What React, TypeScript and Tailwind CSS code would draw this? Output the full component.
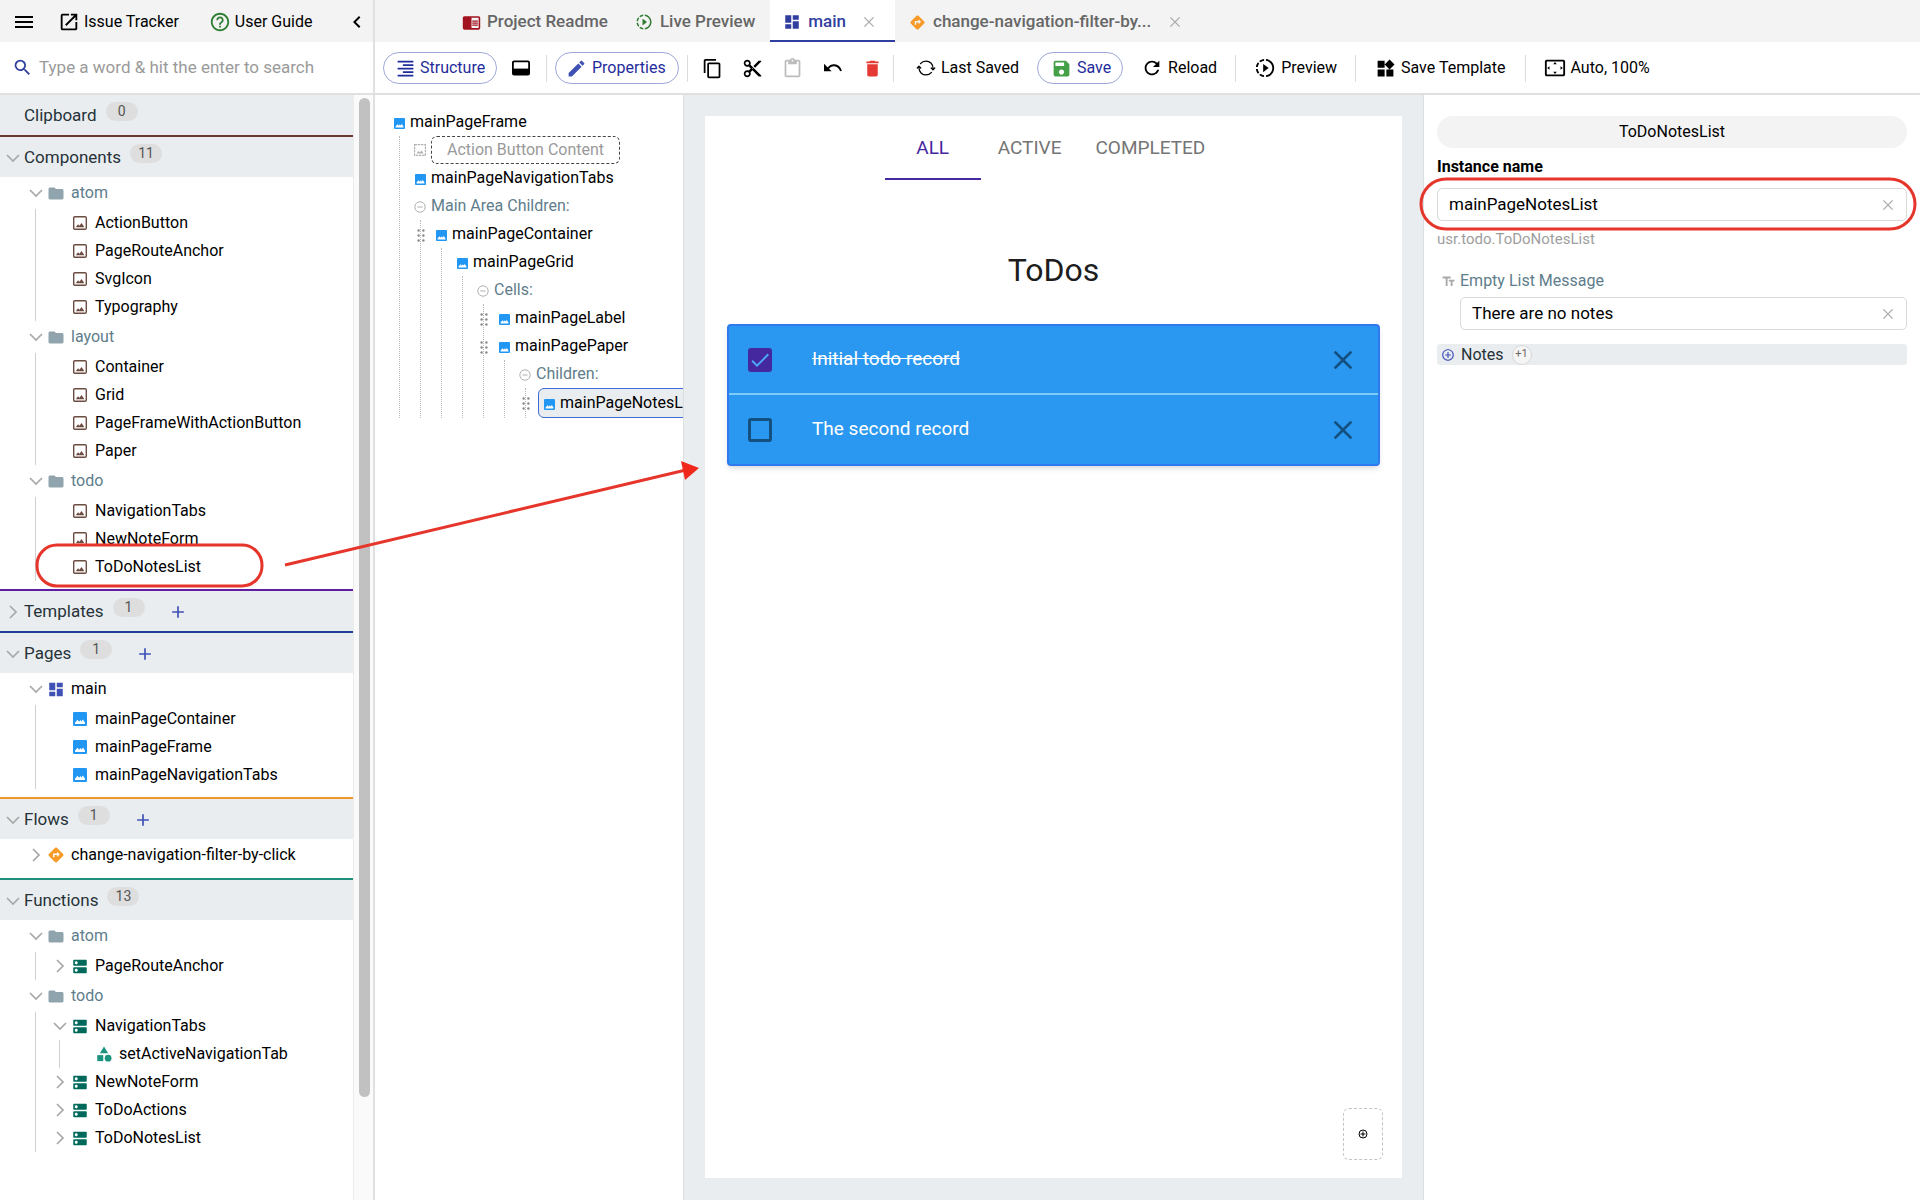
import type { ReactNode } from "react";
import {
  MdMenu, MdOpenInNew, MdHelpOutline, MdChevronLeft, MdSearch, MdChromeReaderMode, MdSlowMotionVideo,
  MdDashboard, MdDirections, MdClose, MdFormatAlignRight, MdEdit, MdContentCopy, MdContentCut,
  MdContentPaste, MdDelete, MdSave, MdRefresh, MdWidgets, MdOutlineSettingsOverscan, MdFolder, MdDns,
  MdCategory, MdAdd, MdTextFields, MdAddCircleOutline, MdCheck,
} from "react-icons/md";
import { IoSyncOutline } from "react-icons/io5";

type Kind = "component" | "instance" | "page" | "flow" | "folder" | "scope" | "fn";

function ImageOutline({ className }: { className: string }) {
  return (
    <svg viewBox="0 0 14 14" className={className} fill="none" aria-hidden="true">
      <rect x="0.7" y="0.7" width="12.6" height="12.6" rx="1.2" stroke="currentColor" strokeWidth="1.4" />
      <path d="M2.800 11.200 5 8.200 6.400 9.800 8.600 7 11.400 11.200z" fill="currentColor" />
    </svg>
  );
}

function ImageFilled({ className }: { className: string }) {
  return (
    <svg viewBox="0 0 14 14" className={className} aria-hidden="true">
      <rect width="14" height="14" rx="1.2" fill="#2196f3" />
      <path d="M2 12 2 10.800 4.400 7.800 6.200 9.800 7.400 8 8.400 9.400 10 7.600 12 10.800 12 12z" fill="#fff" />
    </svg>
  );
}

function ImageDashed({ className }: { className: string }) {
  return (
    <svg viewBox="0 0 12 12" className={className} fill="none" aria-hidden="true">
      <rect x="0.6" y="0.6" width="10.8" height="10.8" stroke="currentColor" strokeWidth="1.2" strokeDasharray="2.4 0.8" />
      <path d="M2.6 9.4 4.6 7 6 8.4 7.6 6.4 9.6 9.4z" fill="currentColor" />
    </svg>
  );
}

function CloseX() {
  return (
    <svg viewBox="0 0 16 16" className="size-4" fill="none" stroke="currentColor" strokeWidth="1.3" aria-hidden="true">
      <path d="M3.400 3.400l9.200 9.200M12.600 3.400 3.400 12.600" />
    </svg>
  );
}

function BottomPanelIcon() {
  return (
    <svg viewBox="0 0 18 16" className="h-4 w-[18px]" aria-hidden="true">
      <rect x="0.9" y="1.4" width="16.2" height="13.2" rx="1.2" fill="none" stroke="currentColor" strokeWidth="1.8" />
      <path d="M1 8.600h16V14H1z" fill="currentColor" />
    </svg>
  );
}

function UndoIcon() {
  return (
    <svg viewBox="0 0 18 10" className="h-2.5 w-[18px]" aria-hidden="true">
      <path d="M3.500 6C5.500 3.200 8 2 10.400 2.200 13.400 2.400 15.800 4.400 17 8" fill="none" stroke="currentColor" strokeWidth="1.9" />
      <path d="M0 0.800V8.200H7.600z" fill="currentColor" />
    </svg>
  );
}

function CirclePlus({ className }: { className: string }) {
  return (
    <svg viewBox="0 0 10 10" className={className} fill="none" stroke="currentColor" aria-hidden="true">
      <circle cx="5" cy="5" r="4" />
      <path d="M2.500 5h5M5 2.500v5" />
    </svg>
  );
}

function Chevron({ open }: { open: boolean }) {
  return (
    <svg viewBox="0 0 14 14" className="size-3.5 shrink-0 text-[#a8a8a8]" fill="none" stroke="currentColor" strokeWidth="1.7" aria-hidden="true">
      <path d={open ? "M1 4l6 6 6-6" : "M4 1l6 6-6 6"} />
    </svg>
  );
}

function CircleMinus() {
  return (
    <svg viewBox="0 0 12 12" className="size-3 shrink-0 text-[#b0b0b0]" fill="none" stroke="currentColor" aria-hidden="true">
      <circle cx="6" cy="6" r="5.2" />
      <path d="M3.4 6h5.2" />
    </svg>
  );
}

function DragDots() {
  return (
    <svg viewBox="0 0 8 13" className="absolute -left-[18px] top-[9px] h-[13px] w-2 text-[#888]" fill="currentColor" aria-hidden="true">
      {[1.5, 6.5, 11.5].map((y) => (
        <g key={y}>
          <circle cx="1.6" cy={y} r="1.2" />
          <circle cx="6.4" cy={y} r="1.2" />
        </g>
      ))}
    </svg>
  );
}

function KindIcon({ kind }: { kind: Kind }) {
  switch (kind) {
    case "component":
      return <ImageOutline className="size-3.5 text-[#6d4c41]" />;
    case "instance":
      return <ImageFilled className="size-3.5" />;
    case "page":
      return <MdDashboard className="size-[19px] text-[#3f51b5]" />;
    case "flow":
      return <MdDirections className="size-[18px] text-[#f89a28]" />;
    case "folder":
      return <MdFolder className="size-[19px] text-[#90a4ae]" />;
    case "scope":
      return <MdDns className="size-[19px] text-[#00695c]" />;
    case "fn":
      return <MdCategory className="size-[18px] text-[#1a937f]" />;
  }
}

function SectionHeader({ title, count, open, add, line }: { title: string; count: number; open?: boolean; add?: boolean; line: string }) {
  return (
    <div className={`flex h-[42px] items-center border-t-2 bg-[#e9edf0] pl-1.5 pt-0.5 ${line}`}>
      <span className="flex w-[18px]">{open !== undefined && <Chevron open={open} />}</span>
      <h2 className="text-[17px] text-[#263238]">{title}</h2>
      <span className="mb-2.5 ml-[9px] w-8 rounded-full bg-[#dedede] text-center text-sm leading-[19px] text-[#555]">{count}</span>
      {add && (
        <button aria-label={`Add to ${title}`} className="ml-[23px] text-[#3f51b5]">
          <MdAdd className="size-5" />
        </button>
      )}
    </div>
  );
}

function Row({ kind, label, open, top }: { kind: Kind; label: string; open?: boolean; top?: boolean }) {
  return (
    <div className={`flex items-center ${top ? "h-8" : "h-7"} ${kind === "folder" ? "text-[#607d8b]" : "text-black"}`}>
      <span className="flex w-[18px]">{open !== undefined && <Chevron open={open} />}</span>
      <span className="mr-1.5 flex w-[18px] justify-center">
        <KindIcon kind={kind} />
      </span>
      <span className="whitespace-nowrap">{label}</span>
    </div>
  );
}

function Branch({ children }: { children: ReactNode }) {
  return <div className="ml-1.5 border-l border-[#d0d0d0] pl-[17px]">{children}</div>;
}

function SideTree() {
  return (
    <div className="min-w-0 flex-1 overflow-hidden">
      <SectionHeader title="Clipboard" count={0} line="-mt-0.5 border-transparent" />
      <SectionHeader title="Components" count={11} open line="border-[#6d3b2c]" />
      <div className="pb-2 pl-[29px]">
        <Row top kind="folder" label="atom" open />
        <Branch>
          {["ActionButton", "PageRouteAnchor", "SvgIcon", "Typography"].map((n) => <Row key={n} kind="component" label={n} />)}
        </Branch>
        <Row top kind="folder" label="layout" open />
        <Branch>
          {["Container", "Grid", "PageFrameWithActionButton", "Paper"].map((n) => <Row key={n} kind="component" label={n} />)}
        </Branch>
        <Row top kind="folder" label="todo" open />
        <Branch>
          {["NavigationTabs", "NewNoteForm", "ToDoNotesList"].map((n) => <Row key={n} kind="component" label={n} />)}
        </Branch>
      </div>
      <SectionHeader title="Templates" count={1} open={false} add line="border-[#5e1fa5]" />
      <SectionHeader title="Pages" count={1} open add line="border-[#1f3f98]" />
      <div className="pb-2 pl-[29px]">
        <Row top kind="page" label="main" open />
        <Branch>
          {["mainPageContainer", "mainPageFrame", "mainPageNavigationTabs"].map((n) => <Row key={n} kind="instance" label={n} />)}
        </Branch>
      </div>
      <SectionHeader title="Flows" count={1} open add line="border-[#f0982c]" />
      <div className="pb-[7px] pl-[29px]">
        <Row top kind="flow" label="change-navigation-filter-by-click" open={false} />
      </div>
      <SectionHeader title="Functions" count={13} open line="border-[#1f8f7c]" />
      <div className="pl-[29px]">
        <Row top kind="folder" label="atom" open />
        <Branch>
          <Row kind="scope" label="PageRouteAnchor" open={false} />
        </Branch>
        <Row top kind="folder" label="todo" open />
        <Branch>
          <Row kind="scope" label="NavigationTabs" open />
          <Branch>
            <Row kind="fn" label="setActiveNavigationTab" />
          </Branch>
          <Row kind="scope" label="NewNoteForm" open={false} />
          <Row kind="scope" label="ToDoActions" open={false} />
          <Row kind="scope" label="ToDoNotesList" open={false} />
        </Branch>
      </div>
    </div>
  );
}

function TreeNode({ label, drag, group, children }: { label: string; drag?: boolean; group?: boolean; children?: ReactNode }) {
  return (
    <>
      <div className="relative flex h-7 items-center whitespace-nowrap">
        {drag && <DragDots />}
        <span className="mr-[5px] flex w-3 shrink-0 justify-center pt-0.5">
          {group ? <CircleMinus /> : <ImageFilled className="size-[11px]" />}
        </span>
        <span className={group ? "text-[#607d8b]" : "text-black"}>{label}</span>
      </div>
      {children && <div className="ml-1.5 border-l border-dotted border-[#b8b8b8] pl-3.5">{children}</div>}
    </>
  );
}

function StructurePanel() {
  return (
    <section aria-label="Structure" className="w-[309px] shrink-0 overflow-hidden border-r border-[#dcdfe2] pl-[18px] pt-[13px]">
      <TreeNode label="mainPageFrame">
        <div className="flex h-7 items-center whitespace-nowrap">
          <ImageDashed className="mr-[5px] size-3 text-[#b0b0b0]" />
          <span className="rounded-md border border-dashed border-[#444] px-[15px] leading-[26px] text-[#9a9a9a]">Action Button Content</span>
        </div>
        <TreeNode label="mainPageNavigationTabs" />
        <TreeNode label="Main Area Children:" group>
          <TreeNode label="mainPageContainer" drag>
            <TreeNode label="mainPageGrid">
              <TreeNode label="Cells:" group>
                <TreeNode label="mainPageLabel" drag />
                <TreeNode label="mainPagePaper" drag>
                  <TreeNode label="Children:" group>
                    <div className="relative">
                      <DragDots />
                      <div className="-ml-0.5 w-64 rounded-md border border-[#3f6ad8] bg-[#e9edf0] pl-1">
                        <TreeNode label="mainPageNotesList" />
                      </div>
                    </div>
                  </TreeNode>
                </TreeNode>
              </TreeNode>
            </TreeNode>
          </TreeNode>
        </TreeNode>
      </TreeNode>
    </section>
  );
}

function Separator() {
  return <span className="h-[27px] w-px shrink-0 bg-[#dcdcdc]" />;
}

function Pill({ icon, label, className }: { icon: ReactNode; label: string; className: string }) {
  return (
    <button className={`flex h-8 shrink-0 items-center whitespace-nowrap rounded-full border border-[#9fa8da] text-[#1f2d9c] ${className}`}>
      {icon}
      {label}
    </button>
  );
}

function Tool({ icon, label, className }: { icon: ReactNode; label: string; className: string }) {
  return (
    <button className={`flex shrink-0 items-center gap-[5px] whitespace-nowrap ${className}`}>
      {icon}
      {label}
    </button>
  );
}

function Toolbar() {
  return (
    <div className="flex h-[51px] items-center pl-2 pt-px">
      <Pill className="w-[114px] gap-1 pl-[11px]" icon={<MdFormatAlignRight className="size-[21px]" />} label="Structure" />
      <button aria-label="Bottom panel" className="ml-[15px] mr-4"><BottomPanelIcon /></button>
      <Separator />
      <Pill className="ml-2 mr-2 w-[124px] gap-[5px] pl-2.5" icon={<MdEdit className="size-[21px] text-[#3f51b5]" />} label="Properties" />
      <Separator />
      <div className="flex items-center gap-[19px] pl-3.5 pr-2.5">
        <button aria-label="Copy"><MdContentCopy className="size-[21px]" /></button>
        <button aria-label="Cut"><MdContentCut className="size-[21px]" /></button>
        <button aria-label="Paste" className="text-[#bdbdbd]"><MdContentPaste className="size-[21px]" /></button>
        <button aria-label="Undo" className="flex w-[21px] justify-center"><UndoIcon /></button>
        <button aria-label="Delete" className="text-[#e53935]"><MdDelete className="size-[21px]" /></button>
      </div>
      <Separator />
      <Tool className="ml-[22px]" icon={<IoSyncOutline className="size-5" />} label="Last Saved" />
      <Pill className="ml-[18px] w-[86px] gap-[5px] pl-[13px]" icon={<MdSave className="size-[21px] text-[#43a047]" />} label="Save" />
      <Tool className="ml-[18px] mr-[18px]" icon={<MdRefresh className="size-[22px]" />} label="Reload" />
      <Separator />
      <Tool className="ml-[18px] mr-[18px]" icon={<MdSlowMotionVideo className="size-[22px]" />} label="Preview" />
      <Separator />
      <Tool className="mx-[19px]" icon={<MdWidgets className="size-[21px]" />} label="Save Template" />
      <Separator />
      <Tool className="ml-[18px]" icon={<MdOutlineSettingsOverscan className="size-[22px]" />} label="Auto, 100%" />
    </div>
  );
}

function Tabs() {
  return (
    <div role="tablist" className="flex h-[42px] bg-[#f3f3f3] pl-[87px] text-[17px] font-medium text-[#666]">
      <button role="tab" aria-selected="false" className="flex items-center gap-1.5 whitespace-nowrap pr-[27px] pt-0.5">
        <MdChromeReaderMode className="size-[19px] text-[#a3101f]" />
        Project Readme
      </button>
      <button role="tab" aria-selected="false" className="flex items-center gap-[7px] whitespace-nowrap pr-[15px] pt-0.5">
        <MdSlowMotionVideo className="size-[18px] text-[#2e7d32]" />
        Live Preview
      </button>
      <div className="flex items-center border-b-2 border-[#303f9f] bg-white pl-[13px] pr-[18px] pt-1">
        <button role="tab" aria-selected="true" className="flex items-center gap-[7px] text-[#303f9f]">
          <MdDashboard className="size-[18px]" />
          main
        </button>
        <button aria-label="Close main" className="ml-[15px] text-[#aaa]"><CloseX /></button>
      </div>
      <div className="flex items-center pl-3.5 pt-0.5">
        <button role="tab" aria-selected="false" className="flex items-center gap-[7px] whitespace-nowrap">
          <MdDirections className="size-[17px] text-[#f89a28]" />
          change-navigation-filter-by...
        </button>
        <button aria-label="Close flow" className="ml-4 text-[#aaa]"><CloseX /></button>
      </div>
    </div>
  );
}

function Note({ id, label, done }: { id: string; label: string; done?: boolean }) {
  return (
    <li className="flex h-[69px] items-center pl-[19px] pr-[23px]">
      <span className="relative flex size-6">
        <input
          id={id}
          type="checkbox"
          defaultChecked={done}
          className="size-6 appearance-none rounded-[3px] border-[3px] border-[#14507f] checked:border-[#4527a0] checked:bg-[#4527a0]"
        />
        {done && <MdCheck className="pointer-events-none absolute left-0 top-0 size-6 text-[#4aa8f5]" />}
      </span>
      <label htmlFor={id} className={`ml-10 flex-1 text-[19px] text-white ${done ? "line-through" : ""}`}>{label}</label>
      <button aria-label={`Delete ${label}`} className="text-[#14507f]"><MdClose className="-m-1 size-8" /></button>
    </li>
  );
}

function Canvas() {
  return (
    <main className="flex min-w-0 flex-1 bg-[#e9edf0] px-[21px] pb-[22px] pt-[21px]">
      <div className="relative flex flex-1 flex-col bg-white px-[22px]">
        <div role="tablist" className="flex justify-center text-[19px] text-[#757575]">
          <button role="tab" aria-selected="true" className="h-16 w-24 border-b-2 border-[#4527a0] pt-0.5 text-[#4527a0]">ALL</button>
          <button role="tab" aria-selected="false" className="h-16 px-[17px]">ACTIVE</button>
          <button role="tab" aria-selected="false" className="h-16 px-[17px]">COMPLETED</button>
        </div>
        <h1 className="mt-[66px] text-center text-[32px] leading-[48px] text-[#1d1d1d]">ToDos</h1>
        <ul className="mt-[30px] divide-y-2 divide-[#7ccbf8] rounded-sm border-2 border-[#3079ee] bg-[#2a98f0] shadow-md">
          <Note id="note-1" label="Initial todo record" done />
          <Note id="note-2" label="The second record" />
        </ul>
        <button aria-label="Add component" className="mb-[18px] ml-auto mr-[-3px] mt-auto flex h-[52px] w-10 items-center justify-center rounded-md border border-dashed border-[#c4c4c4]">
          <CirclePlus className="size-2.5" />
        </button>
      </div>
    </main>
  );
}

function Field({ id, value }: { id: string; value: string }) {
  return (
    <div className="flex h-[33px] items-center rounded-[5px] border border-[#d9d9d9] bg-white pl-[11px] pr-2.5">
      <input id={id} defaultValue={value} className="min-w-0 flex-1 bg-transparent text-[17px] outline-none" />
      <button aria-label="Clear" className="text-[#aaa]"><CloseX /></button>
    </div>
  );
}

function PropertiesPanel() {
  return (
    <aside aria-label="Properties" className="w-[497px] shrink-0 border-l border-[#dcdfe2] pl-[13px] pr-[13px] pt-[21px]">
      <h2 className="rounded-full bg-[#f3f3f3] text-center leading-8">ToDoNotesList</h2>
      <label htmlFor="instance" className="block pb-[9px] pt-[7px] font-bold leading-6">Instance name</label>
      <div className="relative">
        <Field id="instance" value="mainPageNotesList" />
        <svg viewBox="0 0 498 54" className="pointer-events-none absolute -left-[18px] -top-[11px] h-[54px] w-[498px]" fill="none" aria-hidden="true">
          <rect x="2" y="2" width="494" height="50" rx="25" stroke="#e6352b" strokeWidth="3" />
        </svg>
      </div>
      <p className="pt-1.5 text-[15px] leading-6 text-[#9e9e9e]">usr.todo.ToDoNotesList</p>
      <div className="flex items-center gap-1 pb-1 pl-1 pt-[18px] text-[#607d8b]">
        <MdTextFields className="size-[15px] text-[#a8a8a8]" />
        <label htmlFor="empty" className="leading-6">Empty List Message</label>
      </div>
      <div className="pl-[23px]">
        <Field id="empty" value="There are no notes" />
      </div>
      <div className="mt-3.5 flex h-[21px] items-center rounded-[3px] bg-[#e9edf0] pl-1 text-[#263238]">
        <button aria-label="Add note" className="text-[#3f51b5]"><MdAddCircleOutline className="size-3.5" /></button>
        <span className="ml-1.5">Notes</span>
        <span className="ml-2 flex size-5 items-center justify-center rounded-full border border-[#d8d8d8] bg-[#f5f5f5] text-[11px] text-[#666]">+1</span>
      </div>
    </aside>
  );
}

export default function App() {
  return (
    <div className="relative flex h-screen overflow-hidden bg-white font-[Roboto,sans-serif] text-base text-black">
      <div className="flex w-[375px] shrink-0 flex-col border-r-2 border-[#e0e0e0]">
        <nav className="flex h-[42px] shrink-0 items-center bg-[#f3f3f3] pl-3 pt-px">
          <button aria-label="Menu"><MdMenu className="size-6" /></button>
          <a href="#issues" className="ml-[22px] flex items-center gap-1 whitespace-nowrap"><MdOpenInNew className="size-[22px]" />Issue Tracker</a>
          <a href="#guide" className="ml-[30px] flex items-center gap-1 whitespace-nowrap"><MdHelpOutline className="size-[22px] text-[#2e7d32]" />User Guide</a>
          <button aria-label="Collapse" className="ml-auto mr-1"><MdChevronLeft className="size-6" /></button>
        </nav>
        <div className="flex h-[53px] shrink-0 items-center border-b-2 border-[#e0e0e0] pl-3">
          <MdSearch className="size-[21px] text-[#303f9f]" />
          <input
            aria-label="Search"
            placeholder="Type a word & hit the enter to search"
            className="ml-1.5 min-w-0 flex-1 text-[17px] outline-none placeholder:text-[#9a9a9a]"
          />
        </div>
        <div className="flex min-h-0 flex-1">
          <SideTree />
          <div className="w-5 border-l border-[#ececec] bg-[#fafafa] pl-[5px] pt-[3px]">
            <div className="h-[999px] w-[11px] rounded-full bg-[#c1c1c1]" />
          </div>
        </div>
      </div>
      <div className="flex min-w-0 flex-1 flex-col">
        <Tabs />
        <div className="border-b-2 border-[#e0e0e0]">
          <Toolbar />
        </div>
        <div className="flex min-h-0 flex-1">
          <StructurePanel />
          <Canvas />
          <PropertiesPanel />
        </div>
      </div>
      <svg viewBox="0 0 700 600" className="pointer-events-none absolute left-0 top-0 h-[600px] w-[700px]" fill="none" aria-hidden="true">
        <rect x="37" y="545" width="225" height="41" rx="20" stroke="#e6352b" strokeWidth="3" />
        <path d="M285 565 688 469.500" stroke="#e6352b" strokeWidth="3" />
        <path d="M681 461 699 468 685 480z" fill="#f0281c" />
      </svg>
    </div>
  );
}
